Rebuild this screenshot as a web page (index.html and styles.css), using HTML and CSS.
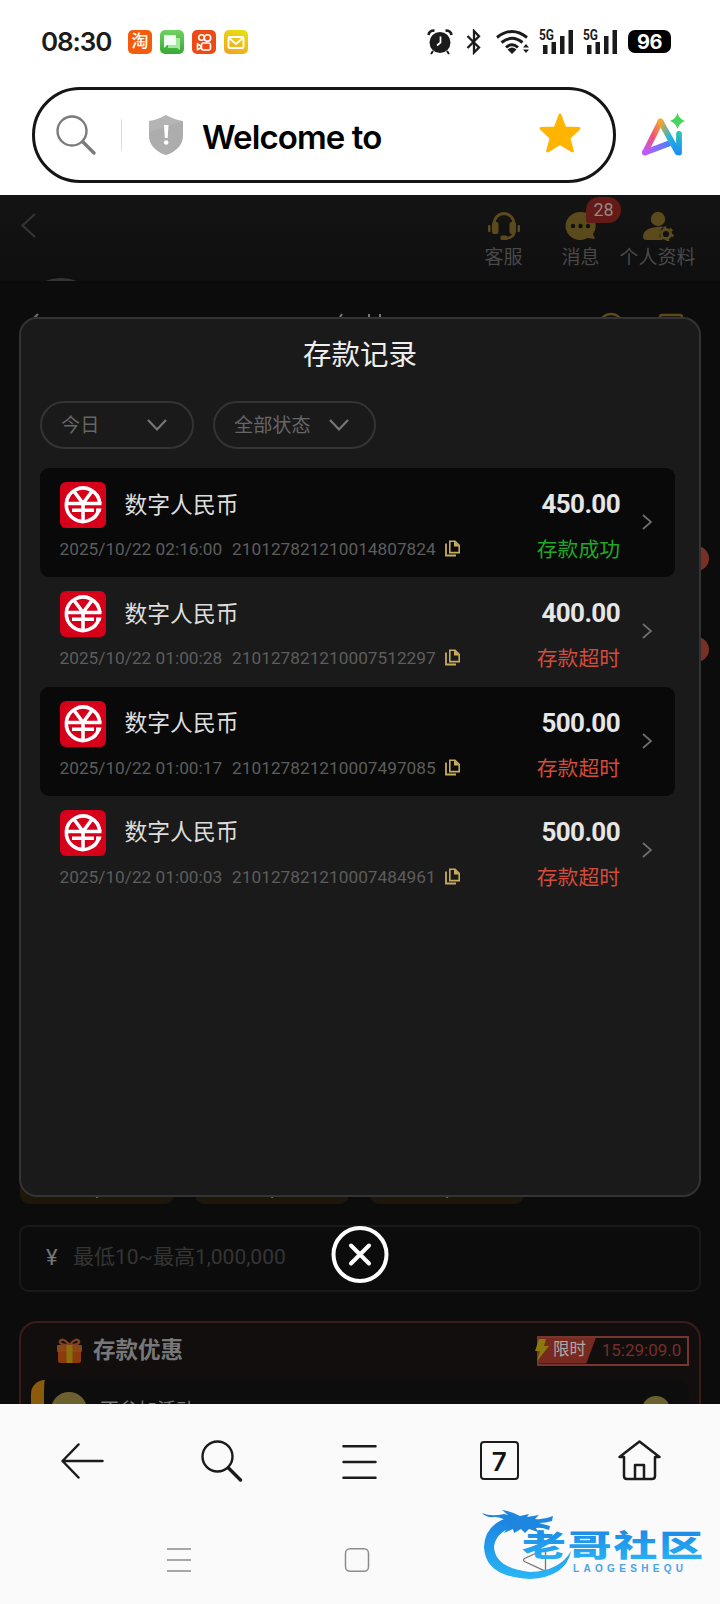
FILE: index.html
```
<!DOCTYPE html>
<html lang="zh-CN">

<head>
    <meta charset="utf-8">
    <title>存款记录</title>
    <link rel="stylesheet" href="styles.css">
</head>

<body>
    <svg class="symbols" width="0" height="0">
        <symbol id="rmb" viewBox="0 0 46 46">
            <rect width="46" height="46" rx="6" fill="#d7001b" />
            <g fill="none" stroke="#fff" stroke-width="3.6">
                <path d="M39.700 21.500A16.700 16.700 0 1 0 39.200 27" />
                <path d="M14.500 10L23 21.500 31.500 10M6 21.500h35.500M12 28.300h22M23 21v18" />
            </g>
            <path d="M36 26.500h5.500l-1 3.600H36z" fill="#fff" />
        </symbol>
        <symbol id="copy" viewBox="0 0 16 17">
            <path d="M1 3.500v12h10" fill="none" stroke="#c9ab5e" stroke-width="1.800" />
            <path d="M4.800 1.200h5.200l4.200 4.200v7.200H4.800z" fill="none" stroke="#c9ab5e" stroke-width="1.600" />
            <path d="M9 1v5.500h5.500z" fill="#c9ab5e" />
        </symbol>
        <symbol id="more" viewBox="0 0 12 18">
            <path d="M2 2l8 7-8 7" fill="none" stroke="#6f6f6f" stroke-width="1.700" />
        </symbol>
        <symbol id="down" viewBox="0 0 20 14">
            <path d="M1 2l9 9.500L19 2" fill="none" stroke="#777" stroke-width="2.200" />
        </symbol>
    </svg>

    <div class="status-bar">
        <span class="time">08:30</span>
        <div class="apps">
            <span class="app taobao">淘</span>
            <span class="app chat">
                <svg width="24" height="24" viewBox="0 0 24 24">
                    <path d="M8 8h12v12l-3-2H8z" fill="#a5e6a0" />
                    <path d="M4 5h12v10H7l-3 3z" fill="#effff0" />
                </svg>
            </span>
            <span class="app video">
                <svg width="24" height="24" viewBox="0 0 24 24" fill="none" stroke="#fff" stroke-width="1.600">
                    <circle cx="9.500" cy="7.500" r="2.800" />
                    <circle cx="15.500" cy="8" r="3.200" />
                    <rect x="9.500" y="13" width="9" height="7" rx="2" />
                    <path d="M9 16l-3.500-2v5.500L9 18z" />
                </svg>
            </span>
            <span class="app mail">
                <svg width="24" height="24" viewBox="0 0 24 24" fill="none" stroke="#fff" stroke-width="1.800">
                    <rect x="4.500" y="7" width="15" height="11" rx="1" />
                    <path d="M5 8l7 6 7-6" />
                </svg>
            </span>
        </div>
        <div class="status-icons">
            <svg class="alarm" width="26" height="26" viewBox="0 0 26 26">
                <circle cx="13" cy="13.500" r="10.500" />
                <path d="M1.500 6Q2 1.500 7.500 1.500M24.500 6Q24 1.500 18.500 1.500" fill="none" stroke="#1b1b1b" stroke-width="2.600" />
                <path d="M6 22l-2 3M20 22l2 3" stroke="#1b1b1b" stroke-width="2" />
                <path d="M13.500 7.500v6l-3.500 3" fill="none" stroke="#fff" stroke-width="1.700" />
            </svg>
            <svg class="bluetooth" width="16" height="26" viewBox="0 0 16 26">
                <path d="M1.500 7L13 18.500 8 23.500V2l5 5.200L1.500 19" fill="none" stroke="#1b1b1b" stroke-width="2.300" />
            </svg>
            <svg class="wifi" width="36" height="26" viewBox="0 0 36 26">
                <path d="M2 8.500Q17 -3.500 32 8.500M6.500 13.500Q17 5 27.500 13.500M11 18.500Q17 13 23 18.500" fill="none" stroke="#1b1b1b" stroke-width="2.900" />
                <path d="M12.500 20.500Q17 16.500 21.500 20.500L17 25z" />
                <path d="M28 18.500l3-3.500 3 3.500zM28 20.500l3 3.500 3-3.500z" />
            </svg>
            <svg class="signal" width="36" height="26" viewBox="0 0 36 26">
                <text x="0" y="11" class="five-g" textLength="15" lengthAdjust="spacingAndGlyphs">5G</text>
                <path d="M4 16h4.500v9H4zM12.500 13H17v12h-4.500zM21 7h4.500v18H21zM29.500 1H34v24h-4.500z" />
            </svg>
            <svg class="signal" width="36" height="26" viewBox="0 0 36 26">
                <text x="0" y="11" class="five-g" textLength="15" lengthAdjust="spacingAndGlyphs">5G</text>
                <path d="M4 16h4.500v9H4zM12.500 13H17v12h-4.500zM21 7h4.500v18H21zM29.500 1H34v24h-4.500z" />
            </svg>
            <span class="battery">96</span>
        </div>
    </div>

    <div class="address-row">
        <div class="address">
            <svg class="search" width="42" height="42" viewBox="0 0 42 42" fill="none" stroke="#7b7b7b">
                <circle cx="17" cy="17" r="14.500" stroke-width="2.400" />
                <path d="M28 28l11 11" stroke-width="3.400" stroke-linecap="round" />
            </svg>
            <span class="divider"></span>
            <svg class="shield" width="38" height="42" viewBox="0 0 38 42">
                <path d="M19 1Q28 6 36 7v14q0 14-17 20Q2 35 2 21V7Q10 6 19 1z" fill="#b4b4b4" />
                <path d="M2 21v-3l34-11v14q0 14-17 20Q2 35 2 21z" fill="#a9a9a9" opacity=".6" />
                <path d="M17 11h4.500l-.8 13h-2.900z" fill="#fff" />
                <circle cx="19.200" cy="28.500" r="2.300" fill="#fff" />
            </svg>
            <span class="page-title">Welcome to</span>
            <svg class="star" width="42" height="42" viewBox="0 0 42 42">
                <path d="M21 3l4.800 12.800L40 16.500 30 26l3.500 13L21 31.500 8.500 39 12 26 2 16.500l14.200-.7z" fill="#ffb400" stroke="#ffb400" stroke-width="2.800" stroke-linejoin="round" />
            </svg>
        </div>
        <svg class="ai" width="46" height="46" viewBox="0 0 46 46">
            <defs>
                <linearGradient id="ai1" x1="0" y1="1" x2="1" y2="0">
                    <stop offset="0" stop-color="#b95cff" />
                    <stop offset=".5" stop-color="#f0507a" />
                    <stop offset="1" stop-color="#f5a52a" />
                </linearGradient>
                <linearGradient id="ai2" x1="0" y1="0" x2="1" y2="1">
                    <stop offset="0" stop-color="#f5a52a" />
                    <stop offset=".5" stop-color="#29b6d8" />
                    <stop offset="1" stop-color="#168bff" />
                </linearGradient>
                <linearGradient id="ai3" x1="0" y1="0" x2="1" y2="0">
                    <stop offset="0" stop-color="#b95cff" />
                    <stop offset="1" stop-color="#4f7cff" />
                </linearGradient>
                <linearGradient id="ai4" gradientUnits="userSpaceOnUse" x1="39" y1="20" x2="39" y2="42">
                    <stop offset="0" stop-color="#2cc6b2" />
                    <stop offset="1" stop-color="#188cff" />
                </linearGradient>
            </defs>
            <g fill="none" stroke-width="5.800" stroke-linecap="round" stroke-linejoin="round">
                <path d="M5 40.500L29 31.500" stroke="url(#ai3)" />
                <path d="M5 40.500L20.500 9.500" stroke="url(#ai1)" />
                <path d="M20.500 9.500L37.500 40" stroke="url(#ai2)" />
                <path d="M39 22v18.500" stroke="url(#ai4)" />
            </g>
            <path d="M37.500 1q1.800 6.200 7.500 8-5.700 1.800-7.500 8-1.800-6.200-7.500-8 5.700-1.800 7.500-8z" fill="#45d65b" />
        </svg>
    </div>

    <div class="page">
        <div class="page-header">
            <svg class="back" width="16" height="26" viewBox="0 0 16 26">
                <path d="M15 2L2.500 13.500 15 25" fill="none" stroke="#343434" stroke-width="2.200" />
            </svg>
            <div class="actions">
                <div class="action">
                    <svg width="34" height="30" viewBox="0 0 34 30" fill="#5a4a1c">
                        <path d="M7 20V13a10 10.500 0 0 1 20 0v8q0 6-9 6.500" fill="none" stroke="#5a4a1c" stroke-width="2.800" />
                        <rect x="5" y="11" width="6.500" height="12" rx="2" />
                        <rect x="22.500" y="11" width="6.500" height="12" rx="2" />
                        <rect x="1" y="14" width="2.500" height="7" rx="1" />
                        <rect x="30.500" y="14" width="2.500" height="7" rx="1" />
                        <rect x="13.500" y="24.500" width="7" height="4.500" rx="1.500" />
                    </svg>
                    <span>客服</span>
                </div>
                <div class="action">
                    <svg width="34" height="30" viewBox="0 0 34 30">
                        <path d="M16.500 1a14.500 14 0 1 0 7 26l7.500 1-2-5A14.500 14 0 0 0 16.500 1z" fill="#5a4a1c" />
                        <g fill="#111"><circle cx="9" cy="15" r="2.200" /><circle cx="16.500" cy="15" r="2.200" /><circle cx="24" cy="15" r="2.200" /></g>
                    </svg>
                    <span>消息</span>
                    <span class="badge">28</span>
                </div>
                <div class="action">
                    <svg width="34" height="30" viewBox="0 0 34 30" fill="#5a4a1c">
                        <circle cx="17" cy="8" r="7.200" />
                        <path d="M16 16q5-1 6 0-6 6-2 13H6q-4 0-4-3 0-9 14-10z" />
                        <circle cx="25" cy="23" r="4.600" fill="none" stroke="#5a4a1c" stroke-width="3" />
                        <circle cx="25" cy="23" r="6.500" fill="none" stroke="#5a4a1c" stroke-width="2.400" stroke-dasharray="3 3.800" />
                    </svg>
                    <span>个人资料</span>
                </div>
            </div>
            <span class="avatar"></span>
        </div>

        <div class="deposit-bar">
            <svg width="720" height="36" viewBox="0 0 720 36" fill="none">
                <path d="M38 33l-14 14" stroke="#666" stroke-width="2.400" />
                <path d="M342 33l-2 3M369 33v3M380 33v3" stroke="#777" stroke-width="2" />
                <circle cx="611" cy="45" r="12" stroke="#5a4a1c" stroke-width="2.400" />
                <rect x="660" y="34" width="22" height="24" rx="2" stroke="#5a4a1c" stroke-width="2.400" />
            </svg>
        </div>
        <div class="channels">
            <span class="hot"></span>
            <span class="hot"></span>
        </div>
        <div class="presets">
            <span>.</span>
            <span>.</span>
            <span>.</span>
        </div>
        <div class="amount-input">
            <span class="yen">¥</span>
            <span class="placeholder">最低10~最高1,000,000</span>
        </div>
        <div class="promo">
            <div class="promo-head">
                <svg class="gift" width="27" height="27" viewBox="0 0 27 27">
                    <path d="M13.500 8Q3 8 4 4q3-4 9.500 4Q20 0 23 4q1 4-9.500 4z" fill="none" stroke="#804020" stroke-width="2.400" />
                    <path d="M2 13h23v11q0 2-2 2H4q-2 0-2-2z" fill="#8a3a0c" />
                    <rect x="1" y="8" width="25" height="7" rx="1" fill="#8a4518" />
                    <rect x="10.500" y="8" width="6" height="18" fill="#8a7009" />
                </svg>
                <b>存款优惠</b>
                <div class="timer">
                    <span class="limit">限时</span>
                    <span class="clock">15:29:09.0</span>
                    <svg class="bolt" width="16" height="24" viewBox="0 0 16 24">
                        <path d="M5 1h7l-2 7h5L3 23l3-10H1z" fill="#8a7a0d" />
                    </svg>
                </div>
            </div>
            <div class="promo-item">
                <span class="coin"></span>
                <span class="promo-name">不参加活动</span>
                <span class="coin small"></span>
            </div>
        </div>

        <div class="modal">
            <h2>存款记录</h2>
            <div class="filters">
                <div class="filter"><span>今日</span><svg width="20" height="14"><use href="#down" /></svg></div>
                <div class="filter wide"><span>全部状态</span><svg width="20" height="14"><use href="#down" /></svg></div>
            </div>
            <div class="records">
                <div class="record">
                    <div class="info">
                        <div class="name"><svg width="46" height="46"><use href="#rmb" /></svg>数字人民币</div>
                        <div class="meta"><span class="date">2025/10/22 02:16:00</span><span>210127821210014807824</span><svg width="16" height="17"><use href="#copy" /></svg></div>
                    </div>
                    <div class="result">
                        <b>450.00</b>
                        <span class="success">存款成功</span>
                    </div>
                    <svg class="more" width="12" height="18"><use href="#more" /></svg>
                </div>
                <div class="record">
                    <div class="info">
                        <div class="name"><svg width="46" height="46"><use href="#rmb" /></svg>数字人民币</div>
                        <div class="meta"><span class="date">2025/10/22 01:00:28</span><span>210127821210007512297</span><svg width="16" height="17"><use href="#copy" /></svg></div>
                    </div>
                    <div class="result">
                        <b>400.00</b>
                        <span class="timeout">存款超时</span>
                    </div>
                    <svg class="more" width="12" height="18"><use href="#more" /></svg>
                </div>
                <div class="record">
                    <div class="info">
                        <div class="name"><svg width="46" height="46"><use href="#rmb" /></svg>数字人民币</div>
                        <div class="meta"><span class="date">2025/10/22 01:00:17</span><span>210127821210007497085</span><svg width="16" height="17"><use href="#copy" /></svg></div>
                    </div>
                    <div class="result">
                        <b>500.00</b>
                        <span class="timeout">存款超时</span>
                    </div>
                    <svg class="more" width="12" height="18"><use href="#more" /></svg>
                </div>
                <div class="record">
                    <div class="info">
                        <div class="name"><svg width="46" height="46"><use href="#rmb" /></svg>数字人民币</div>
                        <div class="meta"><span class="date">2025/10/22 01:00:03</span><span>210127821210007484961</span><svg width="16" height="17"><use href="#copy" /></svg></div>
                    </div>
                    <div class="result">
                        <b>500.00</b>
                        <span class="timeout">存款超时</span>
                    </div>
                    <svg class="more" width="12" height="18"><use href="#more" /></svg>
                </div>
            </div>
        </div>

        <div class="close">
            <svg width="58" height="58" viewBox="0 0 58 58" fill="none" stroke="#fff" stroke-width="4" stroke-linecap="round">
                <circle cx="29" cy="29.500" r="26.500" />
                <path d="M20 20.500l18 18M38 20.500l-18 18" />
            </svg>
        </div>
    </div>

    <footer>
        <div class="toolbar">
            <svg width="44" height="44" viewBox="0 0 44 44" fill="none" stroke="#1b1b1b" stroke-width="2.500" stroke-linecap="round" stroke-linejoin="round">
                <path d="M41.500 21H2M17.500 4.500L1.500 21l16 16.500" />
            </svg>
            <svg width="44" height="44" viewBox="0 0 44 44" fill="none" stroke="#1b1b1b" stroke-linecap="round">
                <circle cx="17.500" cy="16.500" r="15" stroke-width="2.400" />
                <path d="M28.500 28l12 12" stroke-width="3.400" />
            </svg>
            <svg width="44" height="44" viewBox="0 0 44 44" stroke="#1b1b1b" stroke-width="2.500" stroke-linecap="round">
                <path d="M4.500 6.300h32M4.500 22h32M4.500 37.700h32" />
            </svg>
            <span class="tabs">7</span>
            <svg width="44" height="44" viewBox="0 0 44 44" fill="none" stroke="#1b1b1b" stroke-width="2.500" stroke-linejoin="round">
                <path d="M2.500 17L22.500 1.500l20 15.500h-4.500V36q0 3-3 3H10q-3 0-3-3V17z" />
                <path d="M18 39V25h9v14" />
            </svg>
        </div>
        <div class="system-nav">
            <svg width="26" height="26" viewBox="0 0 26 26" stroke="#8c8c8c" stroke-width="1.700">
                <path d="M1 2h24M1 13h24M1 24h24" />
            </svg>
            <svg width="26" height="26" viewBox="0 0 26 26" fill="none" stroke="#8c8c8c" stroke-width="1.500">
                <rect x="1.500" y="1.700" width="23" height="22.600" rx="4.500" />
            </svg>
            <svg width="26" height="26" viewBox="0 0 26 26" fill="none" stroke="#777" stroke-width="1.300">
                <path d="M23.500 4v19q-1 1-2 .3L2.500 14.500Q.5 13 2.500 11.500L21 3q2-1 2.500 1z" />
            </svg>
        </div>
        <svg class="watermark" width="230" height="78" viewBox="0 0 230 78">
            <defs>
                <linearGradient id="blue" x1="0" y1="0" x2="0" y2="1">
                    <stop offset="0" stop-color="#1a80e2" />
                    <stop offset="1" stop-color="#29b6f6" />
                </linearGradient>
            </defs>
            <path d="M36 9Q5 14 4 40q1 30 46 32 36-2 41-28Q80 64 50 65 15 61 14 40q2-19 32-23z" fill="url(#blue)" />
            <path d="M2 6q9 4 22 1l4 1-6-5q12 2 18 6l9-2-2 3 12-2-4 4q9 1 18-3l-1 5q-6 2-13 2l11 3-1 4q-8-3-13-2l2 4-9-3-4 4-4-4-7 4-1-4-9 4 5-8Q24 10 15 10 6 11 2 6z" fill="#1f86e0" />
            <text class="brand" transform="translate(42 49) scale(1.46 1)" textLength="124" fill="url(#blue)">老哥社区</text>
            <text class="latin" x="93" y="65" textLength="110">LAOGESHEQU</text>
        </svg>
    </footer>
</body>

</html>
```
FILE: styles.css
```
* {
    box-sizing: border-box;
}

body {
    margin: 0;
    width: 720px;
    height: 1604px;
    overflow: hidden;
    background-color: #fff;
    font-family: Roboto, "Noto Sans CJK SC", sans-serif;
}

svg {
    display: block;
    flex-shrink: 0;
}

.symbols {
    position: absolute;
}

/* Phone status bar */
.status-bar {
    height: 87px;
    padding: 0 49px 4px 41px;
    display: flex;
    align-items: center;
    color: #1b1b1b;
}

.time {
    width: 87px;
    font: 600 26px Inter, sans-serif;
    letter-spacing: -1.1px;
}

.apps {
    display: flex;
    gap: 8px;
}

.app {
    width: 24px;
    height: 24px;
    border-radius: 5px;
    color: #fff;
    font-size: 17px;
    font-weight: 500;
    line-height: 23px;
    text-align: center;
}

.taobao {
    background-color: #f45b0b;
}

.chat {
    background: linear-gradient(#71d25f, #35a936);
}

.video {
    background-color: #ec4b16;
}

.mail {
    background: linear-gradient(20deg, #f5a01c, #e6e312);
}

.status-icons {
    margin-left: auto;
    display: flex;
    align-items: center;
    fill: #1b1b1b;
}

.bluetooth {
    margin-left: 13px;
}

.wifi {
    margin-left: 13px;
}

.signal {
    margin-left: 8px;
    overflow: visible;
}

.five-g {
    font: 700 14px Roboto, sans-serif;
}

.battery {
    width: 43px;
    height: 23px;
    margin-left: 9px;
    border-radius: 7px;
    background-color: #000;
    color: #fff;
    font: 700 20px/24px Inter, sans-serif;
    letter-spacing: -0.5px;
    text-align: center;
}

/* Browser address bar */
.address-row {
    height: 108px;
    padding: 0 34px 12px 32px;
    display: flex;
    align-items: center;
    justify-content: space-between;
}

.address {
    width: 584px;
    height: 96px;
    padding: 0 32px 0 20px;
    border: 3px solid #151515;
    border-radius: 48px;
    display: flex;
    align-items: center;
}

.divider {
    width: 1px;
    height: 32px;
    margin: 0 25px 0 24px;
    background-color: #ddd;
}

.page-title {
    margin: 3px auto 0 17px;
    color: #000;
    font: 600 33px Inter, sans-serif;
    letter-spacing: -0.9px;
}

.star {
    margin-top: -5px;
}

/* Dimmed page behind the modal */
.page {
    position: relative;
    height: 1209px;
    overflow: hidden;
    background-color: #0c0c0c;
}

.page-header {
    position: relative;
    height: 86px;
    padding: 17px 24px 0 20px;
    display: flex;
    justify-content: space-between;
    overflow: hidden;
    background: linear-gradient(#141414, #0f0f0f);
}

.actions {
    display: flex;
}

.action {
    position: relative;
    width: 77px;
    display: flex;
    flex-direction: column;
    align-items: center;
    color: #494949;
    font-size: 19px;
    line-height: 26px;
    white-space: nowrap;
}

.action svg {
    margin-top: -1px;
}

.action span {
    margin-top: 4px;
}

.action .badge {
    position: absolute;
    top: -15px;
    left: 44px;
    width: 35px;
    height: 26px;
    margin-top: 0;
    border-radius: 13px 13px 13px 3px;
    background-color: #641a15;
    color: #958583;
    font-size: 18px;
    line-height: 25px;
    text-align: center;
}

.avatar {
    position: absolute;
    top: 83px;
    left: 17px;
    width: 88px;
    height: 88px;
    border-radius: 50%;
    background-color: #353535;
}

.deposit-bar {
    height: 60px;
}

.channels {
    height: 842px;
    padding: 205px 11px 0 0;
    display: flex;
    flex-direction: column;
    align-items: flex-end;
    gap: 66px;
}

.hot {
    width: 25px;
    height: 25px;
    border-radius: 50%;
    background-color: #782f26;
}

.presets {
    height: 21px;
    padding: 0 20px;
    display: flex;
    gap: 21px;
}

.presets span {
    width: 154px;
    border-radius: 0 0 9px 9px;
    background-color: #1d170a;
    color: #77705c;
    font-size: 18px;
    line-height: 18px;
    text-align: center;
}

.amount-input {
    height: 67px;
    margin: 21px 19px 29px;
    padding: 0 24px 4px 25px;
    border: 2px solid #191919;
    border-radius: 9px;
    display: flex;
    align-items: center;
    font-size: 21px;
}

.yen {
    width: 27px;
    margin-top: 2px;
    color: #777;
    font-size: 22px;
}

.placeholder {
    margin-top: -3px;
    color: #353535;
}

.promo {
    height: 120px;
    margin: 0 19px;
    border: 2px solid #3a1c1b;
    border-radius: 18px 18px 0 0;
    background-color: #120e0d;
}

.promo-head {
    height: 57px;
    padding: 0 10px 2px 35px;
    display: flex;
    align-items: center;
}

.promo-head b {
    margin: -6px 0 0 10px;
    color: #777;
    font-size: 22.5px;
}

.timer {
    position: relative;
    width: 152px;
    height: 30px;
    margin-left: auto;
    border: 2px solid #76362d;
    display: flex;
    font-size: 17px;
    line-height: 25px;
}

.limit {
    width: 57px;
    padding-left: 14px;
    background-color: #782a20;
    clip-path: polygon(0 0, 100% 0, 83% 100%, 0 100%);
    color: #aaa;
    font-size: 16.500px;
    line-height: 23px;
}

.clock {
    flex: 1;
    color: #73302a;
    text-align: center;
}

.bolt {
    position: absolute;
    top: 0;
    left: -5px;
}

.promo-item {
    height: 70px;
    margin: 0 10px;
    padding: 12px 19px 0 7px;
    border-left: 13px solid #8b5b0c;
    border-radius: 14px 14px 0 0;
    display: flex;
    background-color: #0d0d0d;
}

.coin {
    width: 36px;
    height: 36px;
    border-radius: 50%;
    background-color: #6d602f;
}

.promo-name {
    margin: 1px 0 0 13px;
    color: #777;
    font-size: 19px;
    line-height: 36px;
}

.coin.small {
    width: 28px;
    height: 28px;
    margin: 4px 0 0 auto;
}

/* Deposit records modal */
.modal {
    position: absolute;
    top: 122px;
    left: 19px;
    width: 682px;
    height: 880px;
    padding: 0 19px;
    border: 2px solid #333;
    border-radius: 18px;
    background-color: #1a1a1a;
}

.modal h2 {
    margin: 0;
    height: 82px;
    color: #eee;
    font-size: 28.500px;
    font-weight: 400;
    line-height: 73px;
    text-align: center;
}

.filters {
    display: flex;
    gap: 19px;
}

.filter {
    width: 154px;
    height: 48px;
    padding: 0 25px 0 19px;
    border: 2px solid #343434;
    border-radius: 24px;
    display: flex;
    align-items: center;
    justify-content: space-between;
    color: #666;
    font-size: 19.200px;
}

.filter span {
    margin-top: -3px;
}

.filter.wide {
    width: 163px;
    padding-right: 25px;
}

.records {
    width: 635px;
    margin-top: 19px;
}

.record {
    height: 109.300px;
    padding: 0 22px 0 19.500px;
    border-radius: 9px;
    display: flex;
}

.record:nth-child(odd) {
    background-color: #090909;
}

.info {
    padding-top: 14px;
}

.name {
    display: flex;
    align-items: center;
    gap: 19px;
    color: #ddd;
    font-size: 22.800px;
    line-height: 45px;
}

.meta {
    display: flex;
    align-items: center;
    color: #5d5d5d;
    font-size: 17.250px;
    line-height: 42px;
}

.date {
    margin-right: 10px;
}

.meta svg {
    margin: -1px 0 0 9px;
}

.result {
    margin-left: auto;
    padding-top: 16px;
    display: flex;
    flex-direction: column;
    align-items: flex-end;
    font-size: 20.800px;
    line-height: 53px;
}

.result b {
    color: #e6e6e6;
    font-size: 26px;
    letter-spacing: -0.600px;
    line-height: 40px;
}

.success {
    color: #1fa824;
}

.timeout {
    color: #d14c3c;
}

.more {
    margin: 45px 0 0 21px;
}

.close {
    position: absolute;
    top: 1030px;
    left: 331px;
}

/* Browser toolbar and system keys */
footer {
    position: relative;
    height: 200px;
    background-color: #fafafa;
}

.toolbar {
    height: 143px;
    padding: 36px 12px 0 14px;
    display: grid;
    grid-template-columns: repeat(5, 1fr);
    justify-items: center;
}

.tabs {
    width: 39px;
    height: 39px;
    margin: 1px 1px 0 0;
    border: 2px solid #1b1b1b;
    border-radius: 4px;
    color: #111;
    font: 600 26px/38px Inter, sans-serif;
    text-align: center;
}

.system-nav {
    width: 534px;
    margin-left: 90px;
    display: grid;
    grid-template-columns: repeat(3, 1fr);
    justify-items: center;
}

.watermark {
    position: absolute;
    top: 103px;
    left: 480px;
}

.brand {
    font: 900 30px "Noto Sans CJK SC", sans-serif;
}

.latin {
    fill: #4ba3e8;
    font: 700 10px "Liberation Sans", sans-serif;
}
```
